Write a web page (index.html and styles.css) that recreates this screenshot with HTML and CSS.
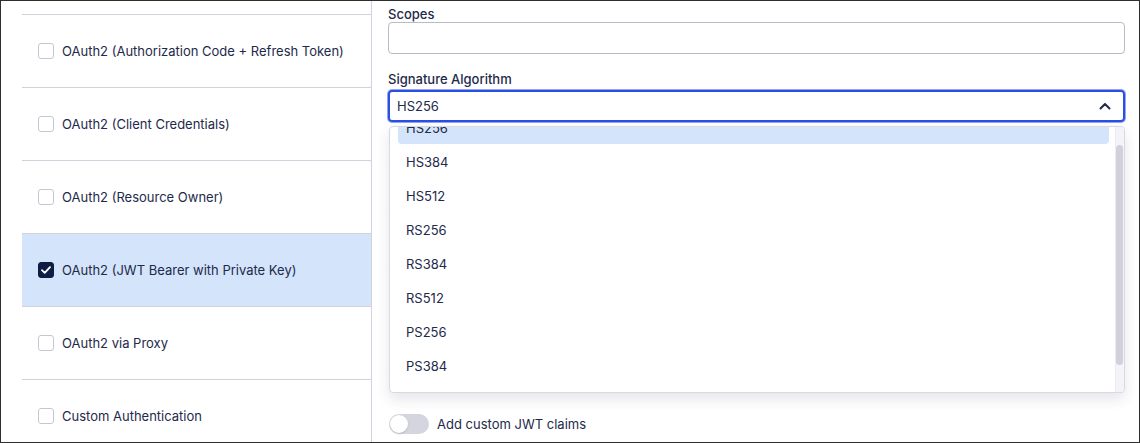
FILE: index.html
```
<!DOCTYPE html>
<html>
<head>
<meta charset="utf-8">
<link rel="stylesheet" href="styles.css">
</head>
<body>
<div class="frame">
  <div class="side">
    <div class="row"><span class="cb"></span><span>OAuth2 (Authorization Code + Refresh Token)</span></div>
    <div class="row"><span class="cb"></span><span>OAuth2 (Client Credentials)</span></div>
    <div class="row"><span class="cb"></span><span>OAuth2 (Resource Owner)</span></div>
    <div class="row active"><span class="cb checked"><svg width="10" height="8" viewBox="0 0 10 8"><path d="M1 4.2 L3.7 6.8 L9 1.2" fill="none" stroke="#fff" stroke-width="1.8" stroke-linecap="round" stroke-linejoin="round"/></svg></span><span>OAuth2 (JWT Bearer with Private Key)</span></div>
    <div class="row"><span class="cb"></span><span>OAuth2 via Proxy</span></div>
    <div class="row"><span class="cb"></span><span>Custom Authentication</span></div>
  </div>
  <div class="main">
    <label class="label">Scopes</label>
    <div class="input"></div>
    <label class="label sig">Signature Algorithm</label>
    <div class="select-wrap">
      <div class="select">
        <span>HS256</span>
        <svg class="chev" width="12" height="8" viewBox="0 0 12 8"><path d="M1.5 6.5 L6 2 L10.5 6.5" fill="none" stroke="#1e2a4a" stroke-width="2" stroke-linecap="round" stroke-linejoin="round"/></svg>
      </div>
      <div class="menu">
        <div class="opts">
          <div class="opt sel">HS256</div>
          <div class="opt">HS384</div>
          <div class="opt">HS512</div>
          <div class="opt">RS256</div>
          <div class="opt">RS384</div>
          <div class="opt">RS512</div>
          <div class="opt">PS256</div>
          <div class="opt">PS384</div>
        </div>
        <div class="track"><div class="thumb"></div></div>
      </div>
    </div>
    <div class="toggles">
      <div class="tg"><span class="switch"><span class="knob"></span></span></div>
      <div class="tg"><span class="switch"><span class="knob"></span></span></div>
      <div class="tg"><span class="switch"><span class="knob"></span></span></div>
      <div class="tg"><span class="switch"><span class="knob"></span></span></div>
      <div class="tg"><span class="switch"><span class="knob"></span></span></div>
      <div class="tg"><span class="switch"><span class="knob"></span></span><span>Add custom JWT claims</span></div>
    </div>
  </div>
</div>
</body>
</html>
```
FILE: styles.css
```
* { box-sizing: border-box; }
html, body { margin: 0; padding: 0; background: #fff; }
body {
  font-family: Inter, "Noto Sans", sans-serif;
  font-size: 13px;
  color: #1e2a4a;
}
.frame {
  width: 1140px;
  height: 443px;
  border: 1px solid #2e2e2e;
  display: flex;
  overflow: hidden;
  background: #fff;
}
.side {
  width: 371px;
  flex: none;
  border-right: 1px solid #d2d2dc;
  padding: 13px 0 0 21px;
  overflow: hidden;
}
.row {
  height: 73px;
  border-top: 1px solid #d2d2dc;
  display: flex;
  align-items: center;
  gap: 8px;
  padding-left: 16px;
  line-height: 16px;
}
.row.active { background: #d3e4fb; }
.cb {
  width: 16px;
  height: 16px;
  border: 1px solid #c6c6d0;
  border-radius: 3px;
  background: #fff;
  flex: none;
  display: flex;
  align-items: center;
  justify-content: center;
}
.cb.checked { background: #0f1d42; border-color: #0f1d42; }
.main {
  flex: 1;
  position: relative;
  padding: 5px 14px 0 16px;
  overflow: hidden;
}
.label {
  display: block;
  line-height: 16px;
  font-weight: 500;
}
.input {
  height: 32px;
  border: 1px solid #babac6;
  border-radius: 4px;
}
.label.sig { margin-top: 17px; }
.select-wrap { position: relative; margin-top: 3px; }
.select {
  height: 32px;
  border: 2px solid #2b4fe4;
  box-shadow: 0 0 0 1px #93a4f1;
  border-radius: 4px;
  display: flex;
  align-items: center;
  justify-content: space-between;
  padding: 0 12px 0 7px;
}
.chev { display: block; }
.menu {
  position: absolute;
  top: 36px;
  left: 1px;
  right: 0;
  height: 267px;
  background: #fff;
  border: 1px solid #d9d9e2;
  border-radius: 4px;
  box-shadow: 0 6px 14px rgba(40, 45, 80, 0.12);
  overflow: hidden;
  z-index: 2;
}
.opts {
  margin-top: -16px;
  padding: 0 15px 0 8px;
}
.opt {
  height: 34px;
  line-height: 34px;
  padding-left: 8px;
  border-radius: 4px;
}
.opt.sel { background: #d3e4fb; height: 33px; margin-bottom: 1px; }
.track {
  position: absolute;
  top: 0;
  right: 0;
  width: 9px;
  height: 100%;
  background: #f4f4f8;
  border-left: 1px solid #ececf2;
}
.thumb {
  position: absolute;
  top: 18px;
  left: 0;
  right: 1px;
  height: 220px;
  background: #d1d1db;
  border-radius: 4px;
}
.toggles {
  display: flex;
  flex-direction: column;
  gap: 32.6px;
  margin-top: 29px;
}
.tg {
  display: flex;
  align-items: center;
  gap: 8px;
  height: 20px;
  padding-left: 1px;
}
.switch {
  width: 40px;
  height: 20px;
  border-radius: 10px;
  background: #d5d5df;
  position: relative;
  flex: none;
}
.knob {
  position: absolute;
  top: 1px;
  left: 1px;
  width: 18px;
  height: 18px;
  border-radius: 50%;
  background: #fff;
  box-shadow: 0 1px 2px rgba(0, 0, 0, 0.15);
}
```
